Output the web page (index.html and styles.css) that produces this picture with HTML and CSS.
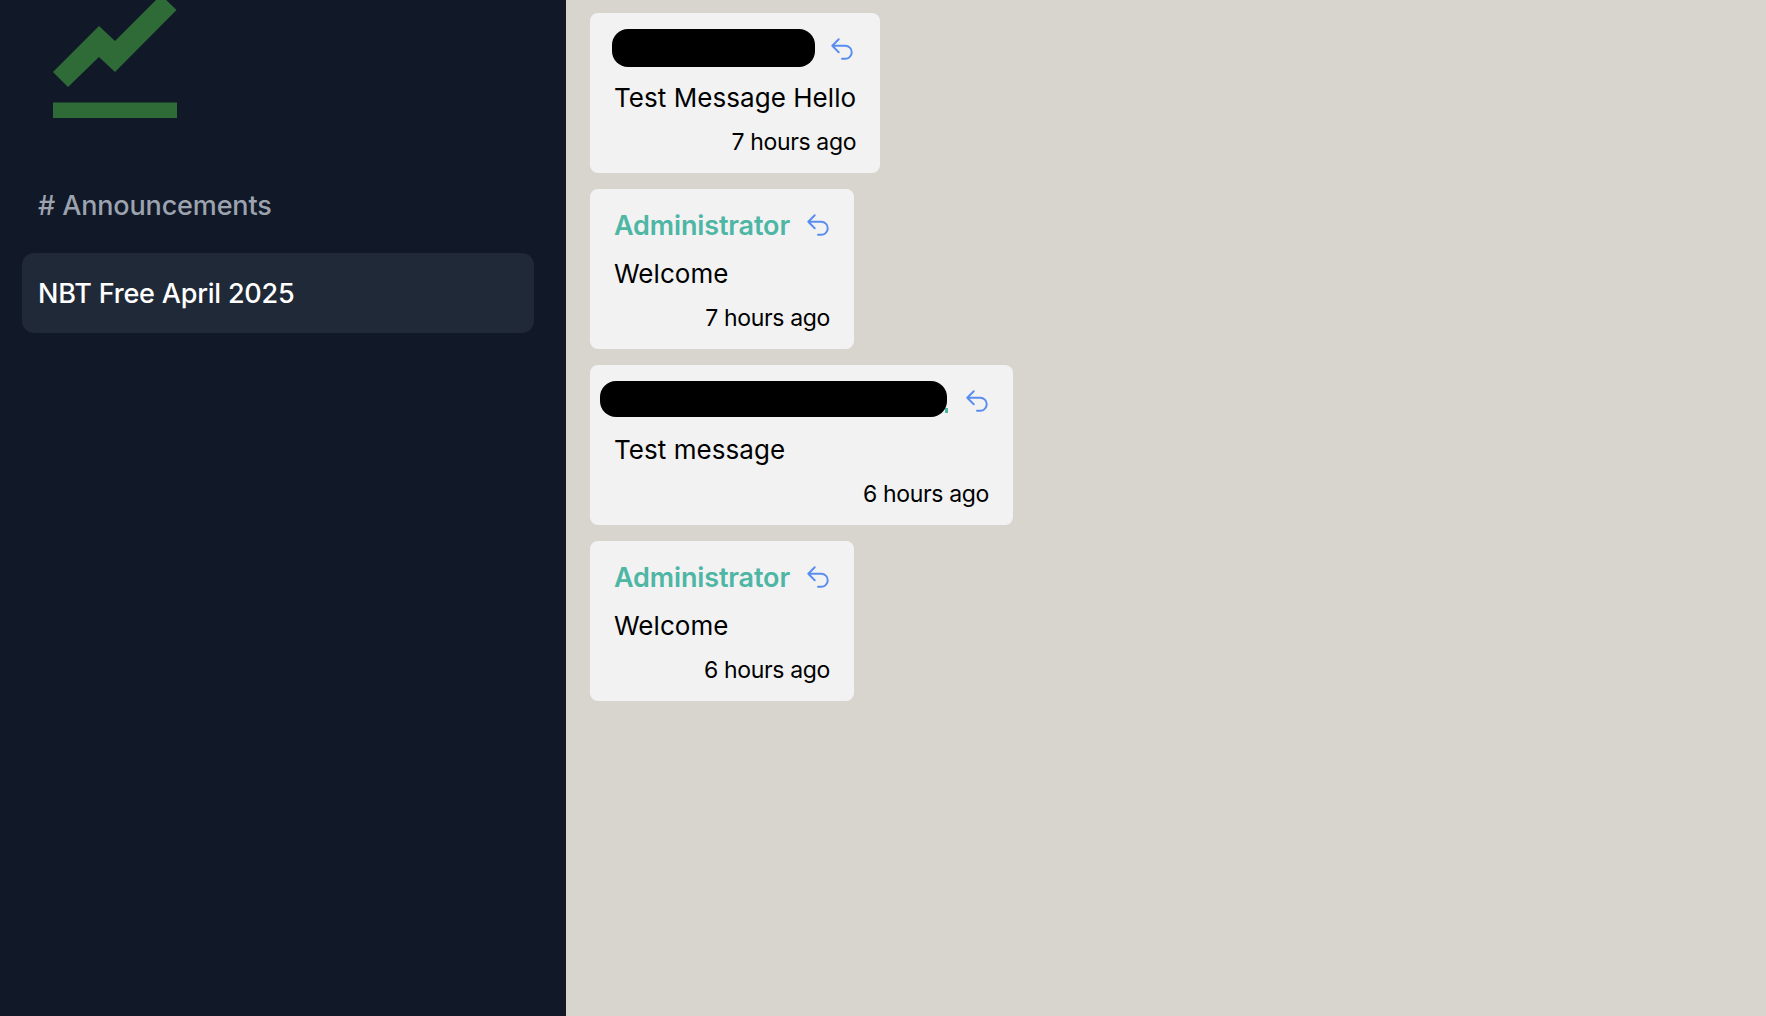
FILE: index.html
```html
<!DOCTYPE html>
<html lang="en">
<head>
<meta charset="utf-8">
<title>Announcements</title>
<link rel="stylesheet" href="styles.css">
</head>
<body>
<div class="app">
  <aside class="sidebar">
    <svg class="logo" viewBox="0 0 124 118" width="124" height="118" aria-hidden="true">
      <polygon points="0,72 46,26 62,41 108,-5 123.5,10 62,72 46,57 15,87"/>
      <rect x="0" y="102.5" width="124" height="16"/>
    </svg>
    <h2 class="section-title"># Announcements</h2>
    <div class="channel">NBT Free April 2025</div>
  </aside>
  <main class="chat">
    <article class="msg">
      <header class="msg-head">
        <span class="name name-a"><span class="redact redact-a"></span></span>
        <svg class="reply" viewBox="0 0 24 24" aria-hidden="true"><path d="M9 15 3 9m0 0 6-6M3 9h12a6 6 0 0 1 0 12h-3"/></svg>
      </header>
      <p class="body">Test Message Hello</p>
      <time class="time">7 hours ago</time>
    </article>
    <article class="msg">
      <header class="msg-head">
        <span class="name">Administrator</span>
        <svg class="reply" viewBox="0 0 24 24" aria-hidden="true"><path d="M9 15 3 9m0 0 6-6M3 9h12a6 6 0 0 1 0 12h-3"/></svg>
      </header>
      <p class="body">Welcome</p>
      <time class="time">7 hours ago</time>
    </article>
    <article class="msg">
      <header class="msg-head">
        <span class="name name-c"><span class="peek"></span><span class="redact redact-c"></span></span>
        <svg class="reply" viewBox="0 0 24 24" aria-hidden="true"><path d="M9 15 3 9m0 0 6-6M3 9h12a6 6 0 0 1 0 12h-3"/></svg>
      </header>
      <p class="body">Test message</p>
      <time class="time">6 hours ago</time>
    </article>
    <article class="msg">
      <header class="msg-head">
        <span class="name">Administrator</span>
        <svg class="reply" viewBox="0 0 24 24" aria-hidden="true"><path d="M9 15 3 9m0 0 6-6M3 9h12a6 6 0 0 1 0 12h-3"/></svg>
      </header>
      <p class="body">Welcome</p>
      <time class="time">6 hours ago</time>
    </article>
  </main>
</div>
</body>
</html>
```
FILE: styles.css
```css
* { box-sizing: border-box; }
html, body { margin: 0; height: 100%; }
body { font-family: "Inter", "Noto Sans", sans-serif; overflow: hidden; }
.app { display: flex; height: 1016px; }
.sidebar { width: 566px; flex: none; background: #111827; padding: 0 32px 0 22px; }
.logo { display: block; margin-left: 31px; fill: #2e6b37; }
.section-title { margin: 70px 0 0 16px; font-size: 27px; line-height: 36px; font-weight: 500; color: #9ca3af; letter-spacing: -0.15px; }
.channel { margin-top: 29px; height: 80px; display: flex; align-items: center; padding-left: 16px; background: #1f2937; border-radius: 12px; color: #fff; font-size: 27px; font-weight: 500; letter-spacing: -0.2px; }
.chat { flex: 1; background: #d8d4ce; padding: 13px 24px; display: flex; flex-direction: column; align-items: flex-start; gap: 16px; }
.msg { background: #f2f2f2; border-radius: 8px; padding: 16px 24px; display: flex; flex-direction: column; height: 160px; }
.msg-head { display: flex; align-items: center; height: 38px; gap: 15px; }
.name { position: relative; display: block; padding-top: 2px; font-size: 27px; font-weight: 600; color: #4db6a4; letter-spacing: -0.14px; white-space: nowrap; }
.name-a { width: 200px; height: 38px; }
.name-c { width: 335px; height: 38px; }
.redact { position: absolute; background: #000; border-radius: 16px; }
.redact-a { left: -2px; top: 0; width: 203px; height: 38px; }
.redact-c { left: -14px; top: 0; width: 347px; height: 36px; }
.peek { position: absolute; left: 331px; top: 27px; width: 3px; height: 5px; background: #4db6a4; }
.reply { width: 26px; height: 26px; flex: none; margin-right: -1px; margin-top: 1px; fill: none; stroke: #5a8df0; stroke-width: 1.8; stroke-linecap: round; stroke-linejoin: round; }
.body { margin: 12px 0; height: 36px; padding-top: 1px; font-size: 26px; line-height: 36px; color: #000; letter-spacing: 0.05px; white-space: nowrap; }
.time { display: block; height: 30px; line-height: 30px; text-align: right; font-size: 23px; color: #000; letter-spacing: -0.35px; white-space: nowrap; }
```
